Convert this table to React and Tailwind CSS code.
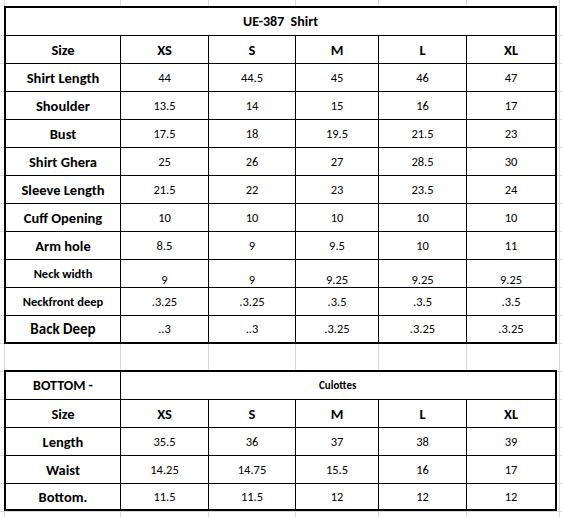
import React from "react";

const cols = "grid grid-cols-[115px_88px_87px_83px_88px_88px]";
const sizes = ["XS", "S", "M", "L", "XL"];

const shirt = [
  { name: "Shirt Length", values: ["44", "44.5", "45", "46", "47"] },
  { name: "Shoulder", values: ["13.5", "14", "15", "16", "17"] },
  { name: "Bust", values: ["17.5", "18", "19.5", "21.5", "23"] },
  { name: "Shirt Ghera", values: ["25", "26", "27", "28.5", "30"] },
  { name: "Sleeve Length", values: ["21.5", "22", "23", "23.5", "24"] },
  { name: "Cuff Opening", values: ["10", "10", "10", "10", "10"] },
  { name: "Arm hole", values: ["8.5", "9", "9.5", "10", "11"] },
  { name: "Neck width", values: ["9", "9", "9.25", "9.25", "9.25"], small: true, bottom: true },
  { name: "Neckfront deep", values: [".3.25", ".3.25", ".3.5", ".3.5", ".3.5"], small: true },
  { name: "Back Deep", values: ["..3", "..3", ".3.25", ".3.25", ".3.25"], big: true },
];

const bottom = [
  { name: "Length", values: ["35.5", "36", "37", "38", "39"] },
  { name: "Waist", values: ["14.25", "14.75", "15.5", "16", "17"] },
  { name: "Bottom.", values: ["11.5", "11.5", "12", "12", "12"] },
];

function classNames(...classes) {
  return classes.filter(Boolean).join(" ");
}

function Row({ row, last, height }) {
  return (
    <div className={classNames(cols, height || "h-[28px]", !last && "border-b border-black")}>
      <div
        className={classNames(
          "flex items-center justify-center border-r border-black font-bold pt-px",
          row.small ? "text-[12.5px]" : row.big ? "text-[15px]" : "text-[14.5px]"
        )}
      >
        {row.name}
      </div>
      {row.values.map((v, i) => (
        <div
          key={i}
          className={classNames(
            "flex justify-center text-[12.5px]",
            row.bottom ? "items-end pb-[1px]" : "items-center pt-px",
            i < 4 && "border-r border-black"
          )}
        >
          {v}
        </div>
      ))}
    </div>
  );
}

function SizeRow() {
  return (
    <div className={classNames(cols, "h-[28px] border-b border-black font-bold text-[14.5px]")}>
      <div className="flex items-center justify-center border-r border-black pt-px">Size</div>
      {sizes.map((s, i) => (
        <div
          key={s}
          className={classNames("flex items-center justify-center pt-px", i < 4 && "border-r border-black")}
        >
          {s}
        </div>
      ))}
    </div>
  );
}

export default function App() {
  return (
    <div
      className="w-[562px] h-[517px] overflow-hidden bg-white text-black font-['Carlito','Lato',sans-serif] leading-none bg-[image:linear-gradient(to_right,transparent_4px,#d9d9d9_4px,#d9d9d9_5px,transparent_5px,transparent_120px,#d9d9d9_120px,#d9d9d9_121px,transparent_121px,transparent_208px,#d9d9d9_208px,#d9d9d9_209px,transparent_209px,transparent_295px,#d9d9d9_295px,#d9d9d9_296px,transparent_296px,transparent_378px,#d9d9d9_378px,#d9d9d9_379px,transparent_379px,transparent_466px,#d9d9d9_466px,#d9d9d9_467px,transparent_467px,transparent_559px,#d9d9d9_559px,#d9d9d9_560px,transparent_560px),repeating-linear-gradient(to_bottom,transparent_0,transparent_27px,#d9d9d9_27px,#d9d9d9_28px)] bg-[position:0_0,0_8px]"
    >
      <div className="ml-[4px] pt-[6px]">
        <div className="w-[553px] border-2 border-black bg-white">
          <div className="h-[28px] border-b border-black flex items-center justify-center font-bold text-[14px] whitespace-pre pt-px">
            {"UE-387  Shirt"}
          </div>
          <SizeRow />
          {shirt.map((row, i) => (
            <Row key={row.name} row={row} last={i === shirt.length - 1} height={i === shirt.length - 1 ? "h-[26px]" : null} />
          ))}
        </div>

        <div className="mt-[26px] w-[553px] border-2 border-black bg-white">
          <div className="grid grid-cols-[115px_1fr] h-[28px] border-b border-black font-bold">
            <div className="flex items-center justify-center border-r border-black text-[14px] pt-px">BOTTOM -</div>
            <div className="flex items-center pl-[198px] text-[11px]">Culottes</div>
          </div>
          <SizeRow />
          {bottom.map((row, i) => (
            <Row key={row.name} row={row} last={i === bottom.length - 1} height={i === bottom.length - 1 ? "h-[25px]" : null} />
          ))}
        </div>
      </div>
    </div>
  );
}
